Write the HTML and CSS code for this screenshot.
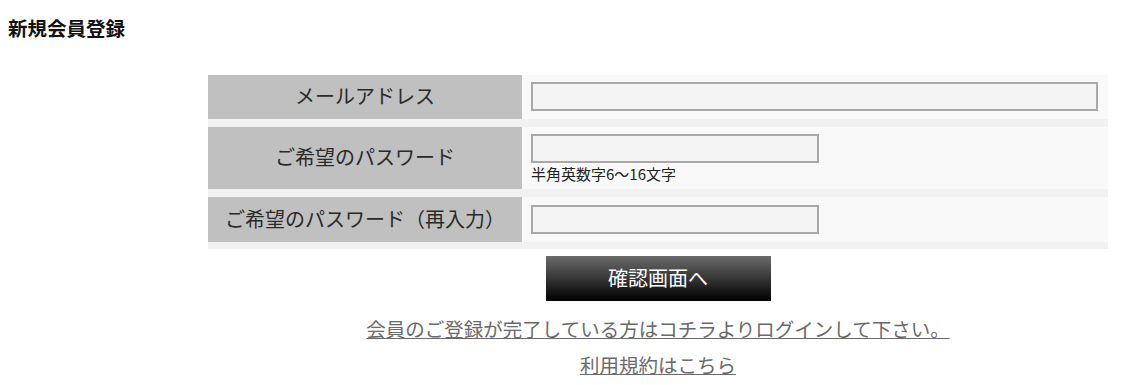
FILE: index.html
```html
<!DOCTYPE html>
<html lang="ja">
<head>
<meta charset="utf-8">
<title>新規会員登録</title>
<link rel="stylesheet" href="styles.css">
</head>
<body>
<h1 class="page-title">新規会員登録</h1>
<div class="form-wrap">
  <table class="reg-table">
    <tr class="row-mail">
      <th class="label">メールアドレス</th>
      <td class="field"><input class="inp inp-wide" type="text"></td>
    </tr>
    <tr class="row-pass">
      <th class="label">ご希望のパスワード</th>
      <td class="field"><input class="inp inp-short" type="password"><div class="note">半角英数字6〜16文字</div></td>
    </tr>
    <tr class="row-pass2">
      <th class="label">ご希望のパスワード（再入力）</th>
      <td class="field"><input class="inp inp-short" type="password"></td>
    </tr>
  </table>
  <div class="actions">
    <button class="submit" type="button">確認画面へ</button>
    <a class="link" href="#">会員のご登録が完了している方はコチラよりログインして下さい。</a>
    <a class="link" href="#">利用規約はこちら</a>
  </div>
</div>
</body>
</html>
```
FILE: styles.css
```css
body {
  margin: 8px;
  font-family: "Noto Sans CJK JP", "Noto Sans", sans-serif;
  color: #222;
  background: #fff;
}
.page-title {
  margin: 0;
  font-size: 19.5px;
  line-height: 40px;
  font-weight: bold;
  color: #111;
}
.form-wrap {
  width: 900px;
  margin: 27px 0 0 200px;
}
.reg-table {
  width: 900px;
  border-collapse: separate;
  border-spacing: 0;
}
.reg-table th,
.reg-table td {
  border-bottom: 8px solid #f1f1f1;
}
.label {
  width: 314px;
  padding: 0 0 3px;
  background: #c0c0c0;
  font-weight: normal;
  font-size: 20px;
  color: #2a2a2a;
  text-align: center;
  vertical-align: middle;
}
.field {
  background: #f9f9f9;
  padding: 7px 9px 8px;
  vertical-align: top;
}
.row-pass .field {
  padding-bottom: 6px;
}
.row-pass2 .field {
  padding-top: 8px;
}
.row-pass2 th,
.row-pass2 td {
  border-bottom-width: 7px;
}
.inp {
  display: block;
  box-sizing: border-box;
  height: 29px;
  margin: 0;
  border: 2px solid #a8a8a8;
  background: #f4f4f4;
  padding: 0 6px;
}
.inp-wide {
  width: 567px;
}
.inp-short {
  width: 288px;
}
.note {
  margin-top: 2px;
  font-size: 15px;
  line-height: 18px;
  color: #222;
}
.actions {
  display: flex;
  flex-direction: column;
  align-items: center;
  padding-top: 7px;
}
.submit {
  width: 225px;
  height: 45px;
  border: 0;
  background: linear-gradient(#6b6b6b, #000);
  color: #fff;
  font-family: inherit;
  font-size: 20px;
  padding: 0 0 2px;
  cursor: pointer;
  margin-bottom: 10px;
}
.link {
  display: block;
  font-size: 19.5px;
  line-height: 36px;
  color: #6a6a6a;
  text-decoration: underline;
}
```
